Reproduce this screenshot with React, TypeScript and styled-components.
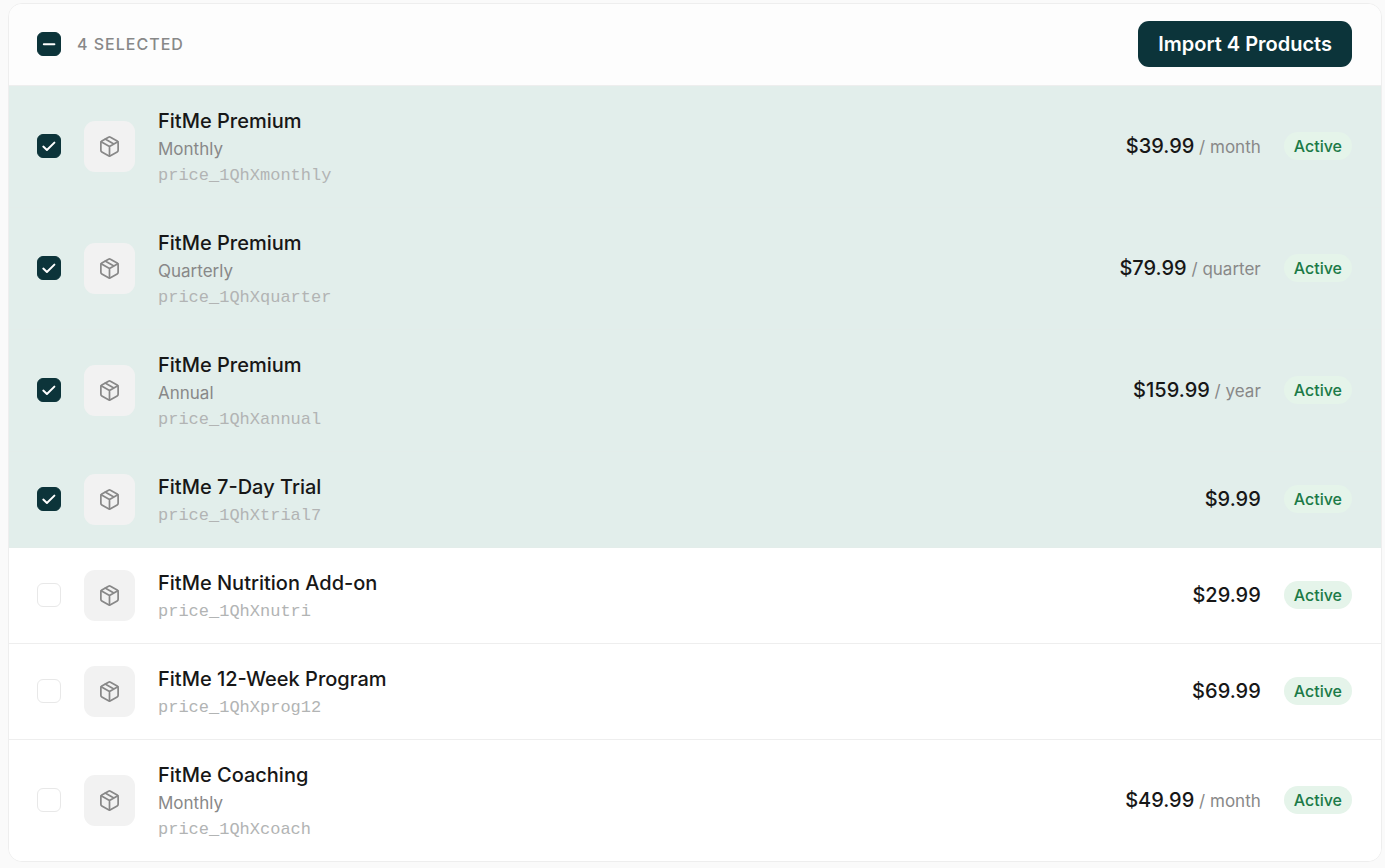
import React, { useEffect, useRef, useState } from "react";
import styled, { createGlobalStyle } from "styled-components";

const GlobalStyle = createGlobalStyle`
  *, *::before, *::after { box-sizing: border-box; }
  body {
    margin: 0;
    background: #fafafa;
    color: #171717;
    font-family: Inter, "Liberation Sans", sans-serif;
  }
`;

const Page = styled.main`
  padding: 3px 3px 5px 8px;
`;

const Card = styled.section`
  overflow: hidden;
  background: #ffffff;
  border: 1px solid #eeeeee;
  border-radius: 14px;
`;

const Header = styled.header`
  display: flex;
  align-items: center;
  gap: 16px;
  padding: 17px 29px 18px 28px;
  background: #fdfdfd;
  border-bottom: 1px solid #eeeeee;
`;

const SelectedCount = styled.label`
  flex: 1;
  color: #888888;
  font-size: 16px;
  font-weight: 500;
  line-height: 26px;
  letter-spacing: 1px;
  text-transform: uppercase;
`;

const ImportButton = styled.button`
  height: 46px;
  padding: 0 20px;
  border: 0;
  border-radius: 11px;
  background: #0c343a;
  color: #ffffff;
  font-family: inherit;
  font-size: 20px;
  font-weight: 600;
  cursor: pointer;
`;

const ProductList = styled.ul`
  margin: 0;
  padding: 0;
  list-style: none;
`;

const ProductRow = styled.li<{ $selected: boolean }>`
  display: flex;
  align-items: center;
  gap: 23px;
  padding: 16px 29px 17px 28px;
  background: ${(p) => (p.$selected ? "#e2eeeb" : "#ffffff")};
  border-bottom: 1px solid ${(p) => (p.$selected ? "#e3edea" : "#eeeeee")};

  &:last-child { border-bottom: 0; }
`;

const CheckWrap = styled.span`
  position: relative;
  display: flex;
  flex: none;
  width: 24px;
  height: 24px;

  svg {
    position: absolute;
    inset: 0;
    pointer-events: none;
  }
`;

const CheckInput = styled.input`
  appearance: none;
  width: 24px;
  height: 24px;
  margin: 0;
  border: 1px solid #e8e8e8;
  border-radius: 6px;
  background: #ffffff;
  cursor: pointer;

  &:checked, &:indeterminate {
    border-color: #0c343a;
    background: #0c343a;
  }
`;

const Tile = styled.span`
  display: flex;
  flex: none;
  align-items: center;
  justify-content: center;
  width: 51px;
  height: 51px;
  border-radius: 11px;
  background: #f2f2f2;
  color: #888888;
`;

const Details = styled.div`
  display: flex;
  flex: 1;
  flex-direction: column;
  min-width: 0;
  padding-top: 4px;
`;

const Name = styled.label`
  font-size: 20px;
  font-weight: 500;
  line-height: 30px;
`;

const Plan = styled.span`
  color: #888888;
  font-size: 17px;
  line-height: 26px;
`;

const PriceId = styled.span`
  color: #b2b4b4;
  font-family: "Liberation Mono", monospace;
  font-size: 17px;
  line-height: 28px;
`;

const Price = styled.span`
  font-size: 20px;
  font-weight: 500;
  line-height: 30px;
  white-space: nowrap;
`;

const Interval = styled.span`
  color: #888888;
  font-size: 17px;
  font-weight: 400;
`;

const Badge = styled.span`
  padding: 0 10px;
  border-radius: 14px;
  background: #e5f4ea;
  color: #1b7a47;
  font-size: 16px;
  font-weight: 500;
  line-height: 28px;
`;

type CheckboxProps = {
  id: string;
  checked: boolean;
  indeterminate?: boolean;
  onChange: () => void;
};

function Checkbox({ id, checked, indeterminate = false, onChange }: CheckboxProps) {
  const ref = useRef<HTMLInputElement>(null);
  useEffect(() => {
    if (ref.current) ref.current.indeterminate = indeterminate;
  }, [indeterminate]);

  return (
    <CheckWrap>
      <CheckInput ref={ref} id={id} type="checkbox" checked={checked} onChange={onChange} />
      {(checked || indeterminate) && (
        <svg width="24" height="24" viewBox="0 0 24 24" fill="none" stroke="#fff" strokeWidth="2" strokeLinecap="round" strokeLinejoin="round" aria-hidden="true">
          <path d={indeterminate ? "M6.8 12.2h10.6" : "M6.3 12.6l3.6 3.4L17.4 8.6"} />
        </svg>
      )}
    </CheckWrap>
  );
}

function PackageIcon() {
  return (
    <svg width="23" height="23" viewBox="0 0 24 24" fill="none" stroke="currentColor" strokeWidth="1.8" strokeLinecap="round" strokeLinejoin="round" aria-hidden="true">
      <path d="M21 8a2 2 0 0 0-1-1.73l-7-4a2 2 0 0 0-2 0l-7 4A2 2 0 0 0 3 8v8a2 2 0 0 0 1 1.73l7 4a2 2 0 0 0 2 0l7-4A2 2 0 0 0 21 16Z" />
      <path d="M3.3 7 12 12l8.7-5M12 22V12M7.5 4.27l9 5.15" />
    </svg>
  );
}

type Product = { id: string; name: string; plan?: string; price: string; interval?: string };

const products: Product[] = [
  { id: "price_1QhXmonthly", name: "FitMe Premium", plan: "Monthly", price: "$39.99", interval: "month" },
  { id: "price_1QhXquarter", name: "FitMe Premium", plan: "Quarterly", price: "$79.99", interval: "quarter" },
  { id: "price_1QhXannual", name: "FitMe Premium", plan: "Annual", price: "$159.99", interval: "year" },
  { id: "price_1QhXtrial7", name: "FitMe 7-Day Trial", price: "$9.99" },
  { id: "price_1QhXnutri", name: "FitMe Nutrition Add-on", price: "$29.99" },
  { id: "price_1QhXprog12", name: "FitMe 12-Week Program", price: "$69.99" },
  { id: "price_1QhXcoach", name: "FitMe Coaching", plan: "Monthly", price: "$49.99", interval: "month" },
];

export default function App() {
  const [selected, setSelected] = useState<string[]>(products.slice(0, 4).map((p) => p.id));
  const all = selected.length === products.length;

  const toggle = (id: string) =>
    setSelected((ids) => (ids.includes(id) ? ids.filter((i) => i !== id) : [...ids, id]));

  return (
    <>
      <GlobalStyle />
      <Page>
        <Card>
          <Header>
            <Checkbox
              id="select-all"
              checked={all}
              indeterminate={selected.length > 0 && !all}
              onChange={() => setSelected(all ? [] : products.map((p) => p.id))}
            />
            <SelectedCount htmlFor="select-all">{selected.length} selected</SelectedCount>
            <ImportButton type="button">Import {selected.length} Products</ImportButton>
          </Header>
          <ProductList>
            {products.map((p) => (
              <ProductRow key={p.id} $selected={selected.includes(p.id)}>
                <Checkbox id={p.id} checked={selected.includes(p.id)} onChange={() => toggle(p.id)} />
                <Tile>
                  <PackageIcon />
                </Tile>
                <Details>
                  <Name htmlFor={p.id}>{p.name}</Name>
                  {p.plan && <Plan>{p.plan}</Plan>}
                  <PriceId>{p.id}</PriceId>
                </Details>
                <Price>
                  {p.price}
                  {p.interval && <Interval> / {p.interval}</Interval>}
                </Price>
                <Badge>Active</Badge>
              </ProductRow>
            ))}
          </ProductList>
        </Card>
      </Page>
    </>
  );
}
